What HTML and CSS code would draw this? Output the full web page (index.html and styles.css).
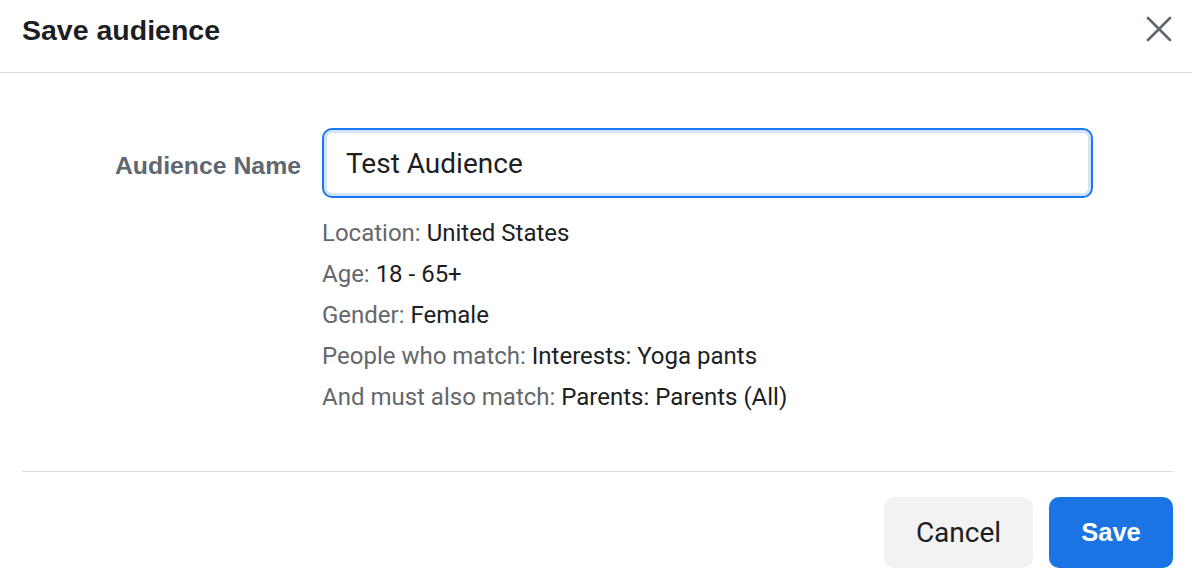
FILE: index.html
```html
<!DOCTYPE html>
<html lang="en">
<head>
  <meta charset="UTF-8">
  <meta name="viewport" content="width=device-width, initial-scale=1.0">
  <title>Save audience</title>
  <link rel="stylesheet" href="styles.css">
</head>
<body>
  <div class="dialog">
    <!-- Header -->
    <header class="dialog-header">
      <h1>Save audience</h1>
      <button class="close-btn" aria-label="Close">
        <svg width="26" height="26" viewBox="0 0 26 26">
          <path d="M2 2 L24 24 M24 2 L2 24" stroke="#606770" stroke-width="2.6" stroke-linecap="round" fill="none"/>
        </svg>
      </button>
    </header>

    <!-- Body -->
    <section class="dialog-body">
      <div class="field-row">
        <label class="field-label" for="audience-name">Audience Name</label>
        <div class="field-main">
          <input id="audience-name" class="name-input" type="text" value="Test Audience">
          <ul class="summary">
            <li><span class="key">Location:</span> United States</li>
            <li><span class="key">Age:</span> 18 - 65+</li>
            <li><span class="key">Gender:</span> Female</li>
            <li><span class="key">People who match:</span> Interests: Yoga pants</li>
            <li><span class="key">And must also match:</span> Parents: Parents (All)</li>
          </ul>
        </div>
      </div>
    </section>

    <!-- Footer -->
    <footer class="dialog-footer">
      <button class="btn btn-cancel">Cancel</button>
      <button class="btn btn-save">Save</button>
    </footer>
  </div>
</body>
</html>
```

FILE: styles.css
```css
* {
  margin: 0;
  padding: 0;
  box-sizing: border-box;
  font-family: Roboto, "Liberation Sans", Arial, sans-serif;
}
body {
  background: #fff;
  color: #1c1e21;
  width: 1192px;
  height: 582px;
  overflow: hidden;
}
/* Header */
.dialog-header {
  height: 73px;
  border-bottom: 1px solid #dadde1;
  display: flex;
  justify-content: space-between;
  align-items: center;
  padding: 0 20px 0 22px;
}
.dialog-header h1 {
  font-family: "Liberation Sans", Arial, sans-serif;
  font-size: 28.5px;
  font-weight: 700;
  color: #1c1e21;
  margin-top: -12px;
}
.close-btn {
  background: none;
  border: none;
  cursor: pointer;
  width: 26px;
  height: 26px;
  margin-top: -14px;
}
.close-btn svg {
  display: block;
}
/* Body */
.dialog-body {
  padding: 55px 22px 0 22px;
}
.field-row {
  display: flex;
  align-items: flex-start;
}
.field-label {
  width: 300px;
  padding-right: 21px;
  text-align: right;
  font-family: "Liberation Sans", Arial, sans-serif;
  font-size: 24.8px;
  font-weight: 700;
  color: #606770;
  line-height: 75px;
}
.field-main {
  flex: 0 0 771px;
}
.name-input {
  display: block;
  width: 100%;
  height: 70px;
  border: 2px solid #1877f2;
  border-radius: 10px;
  box-shadow: inset 0 0 0 3px #d3e3fc;
  padding: 0 22px;
  font-size: 28px;
  color: #1c1e21;
  outline: none;
}
.summary {
  list-style: none;
  margin-top: 15px;
}
.summary li {
  font-size: 24px;
  line-height: 41px;
  color: #1c1e21;
}
.summary .key {
  color: #65676b;
}
/* Footer */
.dialog-footer {
  margin: 53px 19px 0 22px;
  border-top: 1px solid #dadde1;
  padding-top: 25px;
  display: flex;
  justify-content: flex-end;
  gap: 16px;
}
.btn {
  height: 71px;
  border: none;
  border-radius: 10px;
  font-size: 28px;
  cursor: pointer;
}
.btn-cancel {
  width: 149px;
  background: #f2f2f2;
  color: #1c1e21;
}
.btn-save {
  width: 124px;
  background: #1b74e4;
  color: #fff;
  font-family: "Liberation Sans", Arial, sans-serif;
  font-size: 25.5px;
  font-weight: 700;
}
```
